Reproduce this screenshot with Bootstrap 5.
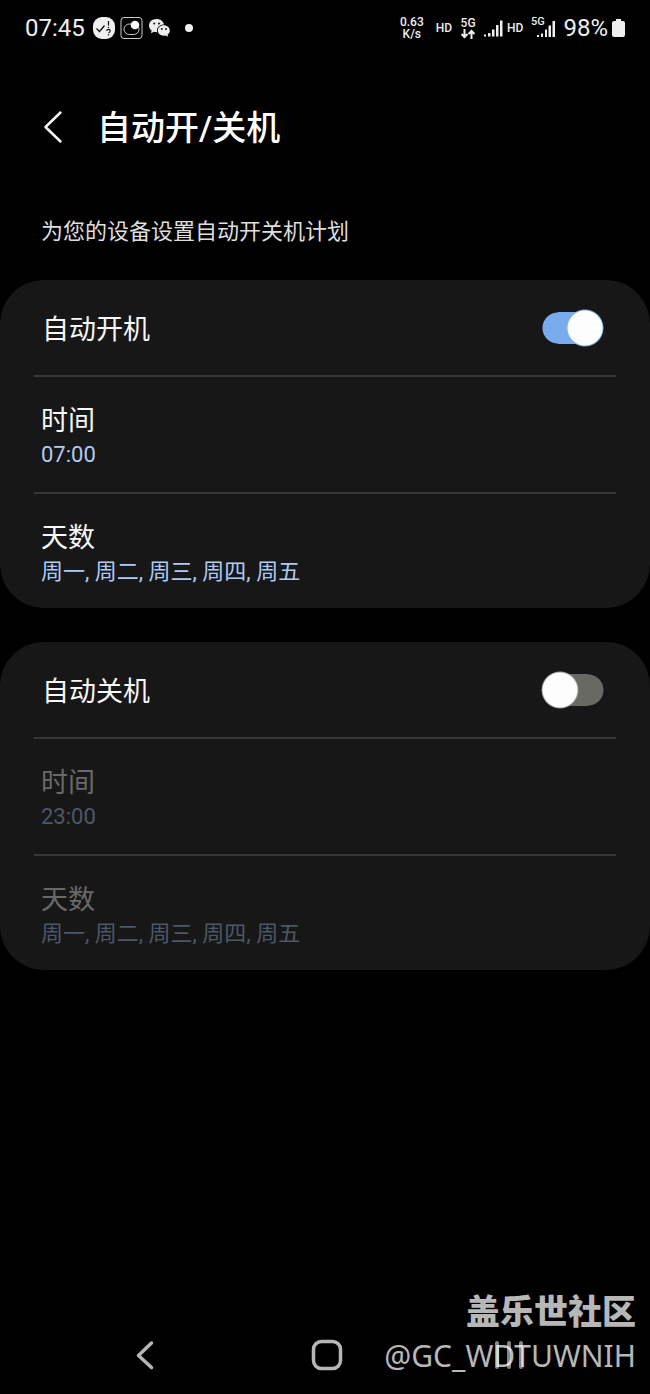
<!DOCTYPE html>
<html lang="zh-CN" data-bs-theme="dark">
<head>
<meta charset="utf-8">
<meta name="viewport" content="width=device-width, initial-scale=1">
<title>自动开/关机</title>
<link href="https://cdn.jsdelivr.net/npm/bootstrap@5.3.0/dist/css/bootstrap.min.css" rel="stylesheet">
<style>
  body { background: #000; color: #f8f8f8; font-family: Roboto, "Noto Sans CJK SC", sans-serif; }
  svg { display: block; flex: none; }
  .status-bar { height: 56px; padding: 0 25px; color: #efefef; }
  .clock { font-size: 24px; line-height: 28px; }
  .tiny { font-size: 12px; line-height: 12px; font-weight: 500; }
  .tiny-hd { font-size: 12px; line-height: 12px; font-weight: 500; }
  .title-bar { height: 144px; padding: 0 40px; }
  .title-bar h1 { font-size: 34px; line-height: 48px; font-weight: 500; }
  .intro { font-size: 22px; line-height: 32px; padding: 0 41px; margin: 16px 0 32px; color: #dedede; }
  .panel { background: #171717; border-radius: 44px; padding: 0 34px; }
  .panel + .panel { margin-top: 34px; }
  .setting { padding: 0 7px; border: 0; border-bottom: 2px solid #363636; background: none; color: inherit; }
  .setting:last-child { border-bottom: 0; height: 114px; }
  .setting-main { height: 97px; padding: 0 12px 0 8px; }
  .setting-main .setting-label { padding-top: 4px; }
  .setting-sub { height: 117px; padding-top: 26px; }
  .setting-label { font-size: 27px; line-height: 36px; }
  .setting-value { font-size: 22px; line-height: 32px; color: #aecbf5; }
  .setting:disabled { color: #696969; }
  .setting:disabled .setting-value { color: #4c5868; }
  .toggle { appearance: none; width: 63px; height: 38px; margin: 0; border-radius: 19px; cursor: pointer;
    background: radial-gradient(circle at 19px 19px, #fdfdfd 17px, #999 18px, transparent 19px),
      linear-gradient(#686963, #686963) center / 30px 32px no-repeat,
      radial-gradient(circle at 47px 19px, #686963 15px, transparent 16px); }
  .toggle:checked { background: radial-gradient(circle at 44px 19px, #fdfdfd 17px, #78acee 18px, transparent 19px),
      linear-gradient(#78acee, #78acee) center / 30px 32px no-repeat,
      radial-gradient(circle at 17px 19px, #78acee 15px, transparent 16px); }
  .nav-keys { height: 78px; gap: 128px; padding-left: 4px; }
  .nav-keys .btn { width: 54px; height: 54px; }
  .watermark { right: 14px; bottom: 18px; color: rgba(255, 255, 255, .72); pointer-events: none; }
  .mark-name { font-size: 34px; line-height: 48px; font-weight: 900; }
  .mark-user { font-family: "Noto Sans", sans-serif; font-size: 30px; line-height: 40px; }
</style>
</head>
<body>
<div class="position-relative d-flex flex-column min-vh-100">
  <header class="status-bar d-flex align-items-center justify-content-between">
    <div class="d-flex align-items-center">
      <span class="clock me-2">07:45</span>
      <svg width="22" height="22" viewBox="0 0 22 22"><rect width="22" height="22" rx="9" fill="#efefef"/><path d="M3.500 11.500l3 3 5-6" fill="none" stroke="#111" stroke-width="1.300"/><path d="M15.500 4v4.500m0 1.200v1.300M13.800 14q0-1.700 1.700-1.700t1.700 1.700q0 1-1.700 2m0 1.200v1.300" fill="none" stroke="#111" stroke-width="1.200"/></svg>
      <svg class="ms-1" width="24" height="24" viewBox="0 0 24 24" fill="none" stroke="#ccc"><rect x="2" y="1.500" width="21" height="21" rx="3"/><rect x="5" y="8" width="15" height="10.500" rx="5.250"/><circle cx="16" cy="9" r="4.300" fill="#fff" stroke="none"/></svg>
      <svg class="ms-1" width="26" height="24" viewBox="0 0 26 24"><g transform="translate(1 0)"><path fill="#eee" d="M8.500 3C4.300 3 1 5.800 1 9.500c0 2 1 3.800 2.600 5L3 17.300l2.900-1.500q1.300.4 2.600.4h.7a6 6 0 0 1-.2-1.700c0-3.500 3.200-6 7-6C15.300 5.200 12.300 3 8.500 3z"/><path fill="#eee" d="M15.800 9.300c-3.500 0-6 2.300-6 5.200s2.500 5.200 6 5.200q1 0 2-.3l2.300 1.300-.5-2.200c1.400-1 2.200-2.300 2.200-4 0-2.900-2.600-5.200-6-5.200z"/><g fill="#222"><circle cx="6.200" cy="7.500" r="1.100"/><circle cx="11" cy="7.500" r="1.100"/><circle cx="13.800" cy="13" r="1"/><circle cx="18" cy="13" r="1"/></g></g></svg>
      <svg class="ms-2" width="14" height="14" viewBox="0 0 14 14"><circle cx="8" cy="7" r="4" fill="#eee"/></svg>
    </div>
    <div class="d-flex align-items-center">
      <span class="tiny d-flex flex-column align-items-center"><span>0.63</span><span>K/s</span></span>
      <span class="tiny-hd ms-2 ps-1 me-1">HD</span>
      <span class="d-flex flex-column align-items-center ms-1"><span class="tiny">5G</span>
        <svg width="16" height="10" viewBox="0 0 16 10" fill="none" stroke="#efefef" stroke-width="2"><path d="M4.500 0v8M1.500 5l3 3 3-3M11.500 10V2M8.500 5l3-3 3 3"/></svg></span>
      <svg class="ms-2" width="19" height="18" viewBox="0 0 19 18" fill="#efefef"><path d="M0 15.500h2v2H0zM4 14h2.500v3.500H4zM8 10.500h2.500v7H8zM12 6h2.500v11.500H12zM16 1.500h2.500v16H16z"/></svg>
      <span class="tiny-hd ms-1 me-1">HD</span>
      <svg class="ms-1" width="24" height="24" viewBox="0 0 24 24" fill="#efefef"><text x="0" y="9" font-size="11" font-weight="500">5G</text><path d="M6 19h2v2H6zM10 17.500h2V21h-2zM14 13.500h2V21h-2zM17.500 9.500H20V21h-2.500zM21.500 5H24v16h-2.500z"/></svg>
      <span class="clock ms-2">98%</span>
      <svg class="ms-1" width="13" height="20" viewBox="0 0 13 20"><path fill="#efefef" d="M4 1h5v2h2q2 0 2 2v12q0 2-2 2H2q-2 0-2-2V5q0-2 2-2h2z"/></svg>
    </div>
  </header>

  <main class="flex-grow-1">
    <div class="title-bar d-flex align-items-center">
      <button type="button" class="btn border-0 p-0 me-4" aria-label="返回"><svg width="33" height="36" viewBox="0 0 33 36" fill="none" stroke="#f4f4f4" stroke-width="2.500" stroke-linecap="round" stroke-linejoin="round"><path d="M20.500 2.500L5.500 17l15 14.500"/></svg></button>
      <h1 class="m-0">自动开/关机</h1>
    </div>
    <p class="intro">为您的设备设置自动开关机计划</p>

    <section class="panel">
      <div class="setting setting-main d-flex align-items-center justify-content-between">
        <label class="setting-label" for="auto-on">自动开机</label>
        <input class="toggle" type="checkbox" role="switch" id="auto-on" checked>
      </div>
      <button type="button" class="setting setting-sub d-flex flex-column w-100 text-start">
        <span class="setting-label">时间</span><span class="setting-value">07:00</span>
      </button>
      <button type="button" class="setting setting-sub d-flex flex-column w-100 text-start">
        <span class="setting-label">天数</span><span class="setting-value">周一, 周二, 周三, 周四, 周五</span>
      </button>
    </section>

    <section class="panel">
      <div class="setting setting-main d-flex align-items-center justify-content-between">
        <label class="setting-label" for="auto-off">自动关机</label>
        <input class="toggle" type="checkbox" role="switch" id="auto-off">
      </div>
      <button type="button" disabled class="setting setting-sub d-flex flex-column w-100 text-start">
        <span class="setting-label">时间</span><span class="setting-value">23:00</span>
      </button>
      <button type="button" disabled class="setting setting-sub d-flex flex-column w-100 text-start">
        <span class="setting-label">天数</span><span class="setting-value">周一, 周二, 周三, 周四, 周五</span>
      </button>
    </section>
  </main>

  <nav class="nav-keys d-flex align-items-center justify-content-center" aria-label="导航">
    <button type="button" class="btn border-0 p-0 d-flex align-items-center justify-content-center" aria-label="后退"><svg width="32" height="32" viewBox="0 0 32 32" fill="none" stroke="#b6b6b6" stroke-width="3.500" stroke-linecap="round" stroke-linejoin="round"><path d="M22.500 4L9.500 16.500l13 12"/></svg></button>
    <button type="button" class="btn border-0 p-0 d-flex align-items-center justify-content-center" aria-label="主屏幕"><svg width="32" height="32" viewBox="0 0 32 32" fill="none" stroke="#b6b6b6" stroke-width="3.500"><rect x="2.500" y="2.500" width="27" height="27" rx="8"/></svg></button>
    <button type="button" class="btn border-0 p-0 d-flex align-items-center justify-content-center" aria-label="最近任务"><svg width="32" height="32" viewBox="0 0 32 32" fill="none" stroke="#858585" stroke-width="4" stroke-linecap="round"><path d="M4 4v24M16 4v24M28 4v24"/></svg></button>
  </nav>
  <div class="watermark position-absolute text-end">
    <div class="mark-name">盖乐世社区</div>
    <div class="mark-user">@GC_WDTUWNIH</div>
  </div>
</div>
<script src="https://cdn.jsdelivr.net/npm/bootstrap@5.3.0/dist/js/bootstrap.bundle.min.js"></script>
</body>
</html>
